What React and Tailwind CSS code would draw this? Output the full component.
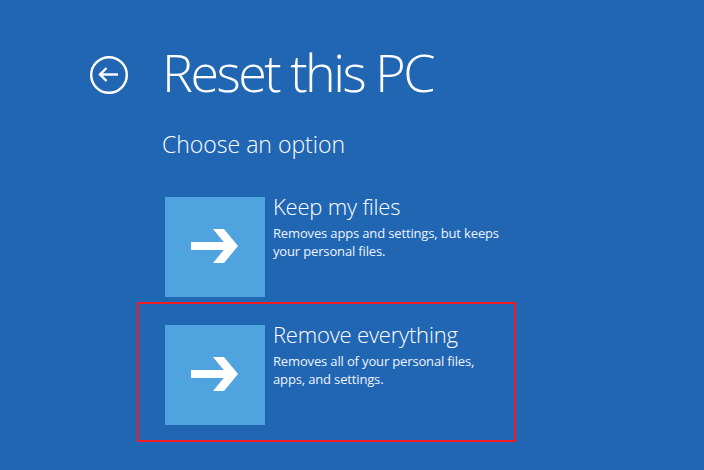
import React from "react";

function Tile() {
  return (
    <div className="w-[100px] h-[100px] shrink-0 bg-[#4fa3de]">
      <svg width="100" height="100" viewBox="0 0 100 100">
        <rect x="26" y="45" width="36" height="8" fill="#fff" />
        <polygon points="48,32 59,32 73,49 59,66 48,66 62,49" fill="#fff" />
      </svg>
    </div>
  );
}

function Option({ title, lines }) {
  return (
    <div className="flex">
      <Tile />
      <div className="ml-[8px] -mt-[1.5px] text-white">
        <div className="text-[22px] leading-none font-light tracking-[-0.2px]">{title}</div>
        <div className="mt-[6.5px] text-[13px] leading-[18px] tracking-[-0.15px] text-[#eef4fb]">
          {lines.map((l, i) => (
            <div key={i}>{l}</div>
          ))}
        </div>
      </div>
    </div>
  );
}

export default function App() {
  return (
    <div
      className="w-[704px] h-[470px] bg-[#2166b3] overflow-hidden"
      style={{ fontFamily: '"Open Sans", "Noto Sans", sans-serif' }}
    >
      <div className="flex items-start pt-[46px] pl-[90px]">
        <div className="mt-[10px]">
          <svg width="38" height="38" viewBox="0 0 38 38" fill="none" stroke="#fff" strokeWidth="2.4">
            <circle cx="19" cy="19" r="17.8" />
            <path d="M10.5 18.5 H28" />
            <path d="M16.5 12 L10 18.5 L16.5 25" strokeLinejoin="miter" />
          </svg>
        </div>
        <div className="ml-[34px] text-white text-[52px] leading-none font-light tracking-[-2.5px]">
          Reset this PC
        </div>
      </div>
      <div className="pl-[162px] mt-[34.6px] text-white text-[23px] leading-none font-light">
        Choose an option
      </div>
      <div className="mt-[41.4px] pl-[165px]">
        <Option
          title="Keep my files"
          lines={["Removes apps and settings, but keeps", "your personal files."]}
        />
      </div>
      <div className="ml-[137px] mt-[5px] w-[379px] h-[140px] border-2 border-[#ef1c24] pt-[21px] pl-[26px]">
        <Option
          title="Remove everything"
          lines={["Removes all of your personal files,", "apps, and settings."]}
        />
      </div>
    </div>
  );
}
